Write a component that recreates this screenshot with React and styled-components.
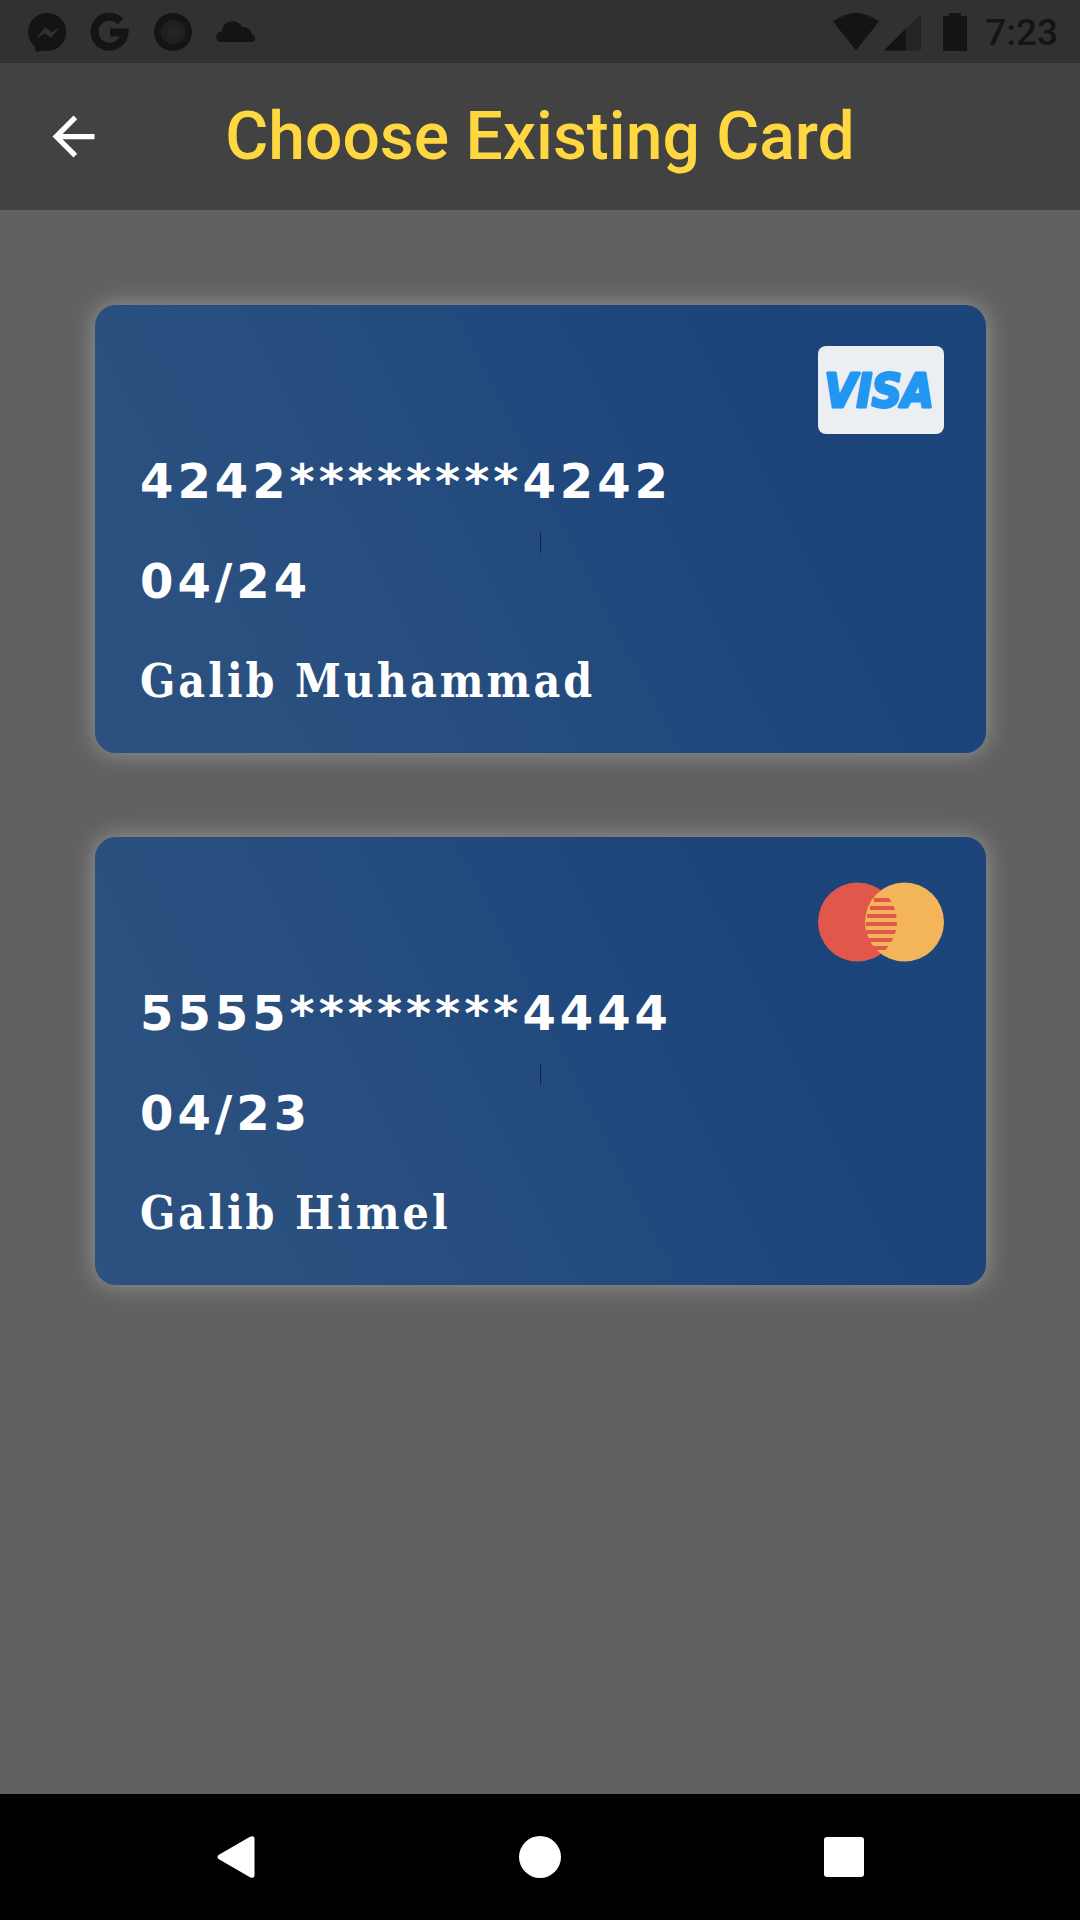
import React from "react";
import styled, { createGlobalStyle } from "styled-components";

const GlobalStyle = createGlobalStyle`
  * { box-sizing: border-box; }
  body { margin: 0; background: #616161; font-family: Roboto, sans-serif; }
`;

const Screen = styled.div`
  min-height: 100vh;
  display: flex;
  flex-direction: column;
`;

const StatusBar = styled.div`
  height: 63px;
  padding: 0 22px 0 26px;
  display: flex;
  align-items: center;
  justify-content: space-between;
  background: #313131;
  color: #141414;
`;

const Notifications = styled.div`
  display: flex;
  gap: 21px;
`;

const SystemState = styled.div`
  display: flex;
  align-items: center;
`;

const Glyph = styled.svg`
  display: block;
  width: ${(p) => p.$w}px;
  height: ${(p) => p.$h}px;
`;

const Clock = styled.time`
  margin-left: 18px;
  padding-top: 2px;
  font-size: 37px;
  line-height: 40px;
  font-weight: 500;
`;

const AppBar = styled.header`
  height: 147px;
  padding: 0 42px;
  display: grid;
  grid-template-columns: 63px 1fr 63px;
  align-items: center;
  background: #424242;
`;

const IconButton = styled.button`
  padding: 0;
  border: 0;
  background: none;
  color: #fff;
  display: flex;
  align-items: center;
  justify-content: center;
  cursor: pointer;
`;

const Title = styled.h1`
  margin: 0;
  text-align: center;
  color: #ffd740;
  font-size: 66px;
  line-height: 76px;
  font-weight: 500;
`;

const CardList = styled.main`
  flex: 1;
  padding: 95px 94px 95px 95px;
  display: flex;
  flex-direction: column;
  gap: 84px;
`;

const Card = styled.article`
  padding: 20px 42px 46px 45px;
  border-radius: 21px;
  background: linear-gradient(
    63deg,
    #2d5180 0%,
    #2a5080 18%,
    #284e7f 32%,
    #244b7e 46%,
    #20487c 58%,
    #1e467c 68%,
    #1c437a 80%,
    #1c467b 88%,
    #1c447a 100%
  );
  box-shadow: 0 0 22px 1px #949494;
  color: #fff;
`;

const Brand = styled.div`
  height: 130px;
  display: flex;
  align-items: center;
  justify-content: flex-end;
`;

const Digits = styled.div`
  font-family: "DejaVu Sans", sans-serif;
  font-size: 48px;
  line-height: 52px;
  font-weight: 700;
  letter-spacing: 4px;
`;

const Holder = styled.div`
  margin-top: 48px;
  font-family: "DejaVu Serif Condensed", "DejaVu Serif", serif;
  font-size: 46px;
  line-height: 52px;
  font-weight: 700;
  letter-spacing: 3px;
`;

const DividerRow = styled.div`
  height: 48px;
  padding: 0 3px 2px 0;
  display: flex;
  align-items: flex-end;
  justify-content: center;
`;

const Divider = styled.span`
  width: 1px;
  height: 21px;
  background: #10254a;
`;

const NavBar = styled.nav`
  height: 126px;
  padding: 0 84px;
  display: grid;
  grid-template-columns: repeat(3, 1fr);
  background: #000;
`;

const Wordmark = styled.text`
  font-family: "Liberation Sans Narrow", "DejaVu Sans Condensed", sans-serif;
  font-size: 46px;
  font-weight: 700;
  font-style: italic;
`;

function VisaLogo() {
  return (
    <Glyph $w={126} $h={88} viewBox="0 0 126 88" role="img" aria-label="Visa">
      <rect width="126" height="88" rx="8" fill="#eceff1" />
      <Wordmark x="61" y="61" textAnchor="middle" fill="#2196f3" stroke="#2196f3" strokeWidth="3" strokeLinejoin="round">
        VISA
      </Wordmark>
    </Glyph>
  );
}

function MastercardLogo() {
  const stripes = [12, 20, 28, 36, 44, 52, 60, 68];
  return (
    <Glyph $w={126} $h={80} viewBox="0 0 126 80" role="img" aria-label="Mastercard">
      <defs>
        <clipPath id="left-disc">
          <circle cx="39.5" cy="40" r="39.5" />
        </clipPath>
      </defs>
      <circle cx="39.5" cy="40" r="39.5" fill="#e2574c" />
      <circle cx="86.5" cy="40" r="39.5" fill="#f4b459" />
      <g clipPath="url(#left-disc)" fill="#e2574c">
        {stripes.map((y, i) => (
          <rect key={y} x={[56, 52, 49, 48, 48, 49, 52, 56][i]} y={y + 4} width="40" height="4" />
        ))}
      </g>
    </Glyph>
  );
}

const cards = [
  { number: "4242********4242", expiry: "04/24", holder: "Galib Muhammad", Logo: VisaLogo },
  { number: "5555********4444", expiry: "04/23", holder: "Galib Himel", Logo: MastercardLogo },
];

export default function App() {
  return (
    <Screen>
      <GlobalStyle />
      <StatusBar>
        <Notifications>
          <Glyph $w={42} $h={42} viewBox="0 0 42 42" fill="currentColor">
            <path
              fillRule="evenodd"
              d="M21 2a19 19 0 1 1-4.500 37.400Q13 41 9.500 40.500L9 35.700A19 19 0 0 1 21 2ZM9.500 28l8.800-10.500q1.200-1 2.500 0l5 3.700 7.700-5.200-7.200 9.500q-1.200 1.500-2.700.500l-5-3.800Z"
            />
          </Glyph>
          <Glyph $w={42} $h={42} viewBox="0 0 42 42" fill="none" stroke="currentColor" strokeWidth="8">
            <path d="M31.500 10.500A15 15 0 1 0 35.500 21.500H21" />
          </Glyph>
          <Glyph $w={42} $h={42} viewBox="0 0 42 42">
            <circle cx="21" cy="21" r="19" fill="#141414" />
            <circle cx="21" cy="21" r="12.500" fill="#1f1f1f" />
            <circle cx="21" cy="21" r="6" fill="#242424" />
          </Glyph>
          <Glyph $w={42} $h={42} viewBox="0 0 42 42" fill="currentColor">
            <path d="M5 31a5.200 5.200 0 0 1 1.500-10.200A11.200 11.200 0 0 1 27.500 16a9 9 0 0 1 9.600 7.800A3.700 3.700 0 0 1 37.500 31Z" />
          </Glyph>
        </Notifications>
        <SystemState>
          <Glyph $w={88} $h={38} viewBox="0 0 88 38" fill="currentColor">
            <path d="M0 8.500Q23-8.500 46 8.500L23 37.500Z" />
            <path d="M88 .5V37.500H51Z" fill="#242424" />
            <path d="M73 15.500V37.500H51Z" />
          </Glyph>
          <Glyph $w={46} $h={38} viewBox="0 0 46 38" fill="currentColor">
            <path d="M28 0H40V3H46V38H22V3H28Z" />
          </Glyph>
          <Clock>7:23</Clock>
        </SystemState>
      </StatusBar>
      <AppBar>
        <IconButton type="button" aria-label="Back">
          <Glyph $w={63} $h={63} viewBox="0 0 24 24" fill="currentColor">
            <path d="M20 11H7.830l5.590-5.590L12 4l-8 8 8 8 1.410-1.410L7.830 13H20v-2z" />
          </Glyph>
        </IconButton>
        <Title>Choose Existing Card</Title>
      </AppBar>
      <CardList>
        {cards.map(({ number, expiry, holder, Logo }) => (
          <Card key={number}>
            <Brand>
              <Logo />
            </Brand>
            <Digits>{number}</Digits>
            <DividerRow>
              <Divider />
            </DividerRow>
            <Digits>{expiry}</Digits>
            <Holder>{holder}</Holder>
          </Card>
        ))}
      </CardList>
      <NavBar>
        <IconButton type="button" aria-label="System back">
          <Glyph $w={38} $h={42} viewBox="0 0 38 42" fill="currentColor">
            <path d="M1.500 19 33 .8Q37.500-1 37.500 3V39Q37.500 43 33 41.200L1.500 23Q-.5 21 1.500 19Z" />
          </Glyph>
        </IconButton>
        <IconButton type="button" aria-label="Home">
          <Glyph $w={42} $h={42} viewBox="0 0 42 42" fill="currentColor">
            <circle cx="21" cy="21" r="21" />
          </Glyph>
        </IconButton>
        <IconButton type="button" aria-label="Recent apps">
          <Glyph $w={40} $h={40} viewBox="0 0 40 40" fill="currentColor">
            <rect width="40" height="40" rx="3" />
          </Glyph>
        </IconButton>
      </NavBar>
    </Screen>
  );
}
